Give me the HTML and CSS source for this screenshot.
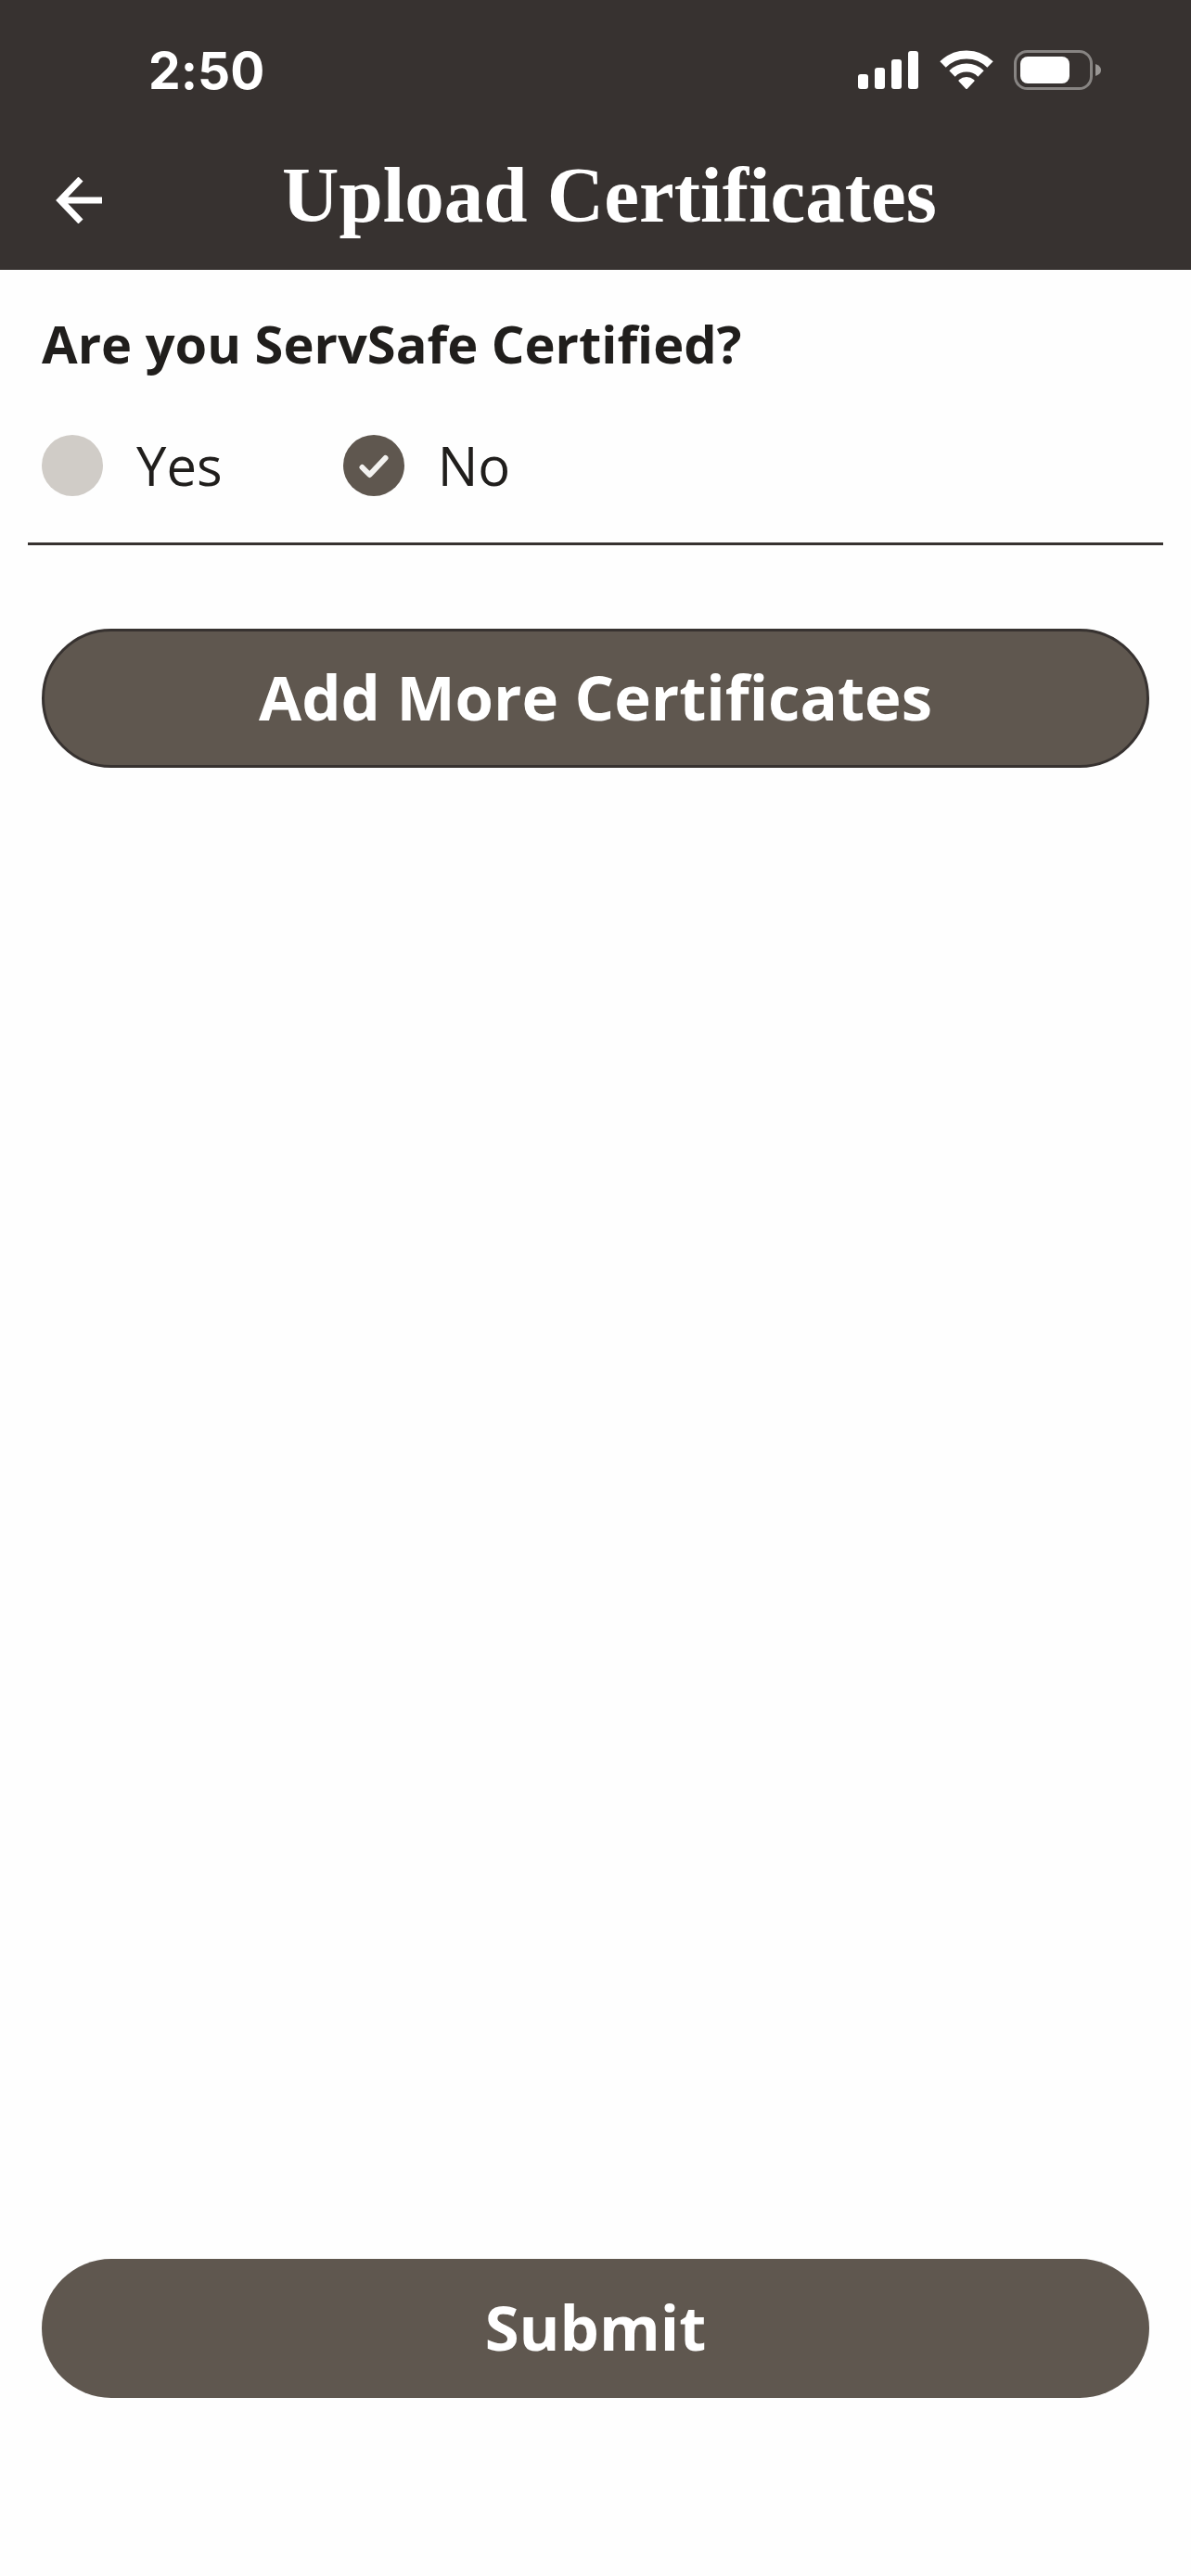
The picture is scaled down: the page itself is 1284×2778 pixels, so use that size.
FILE: index.html
```html
<!DOCTYPE html>
<html lang="en">

<head>
    <meta charset="UTF-8">
    <meta name="viewport" content="width=device-width, initial-scale=1.0">
    <title>Upload Certificates</title>
    <link rel="stylesheet" href="styles.css">
</head>

<body>

    <header class="header">
        <div class="status-bar">
            <span class="time">2:50</span>
            <div class="status-icons">
                <svg width="66" height="44" viewBox="0 0 66 44" fill="#fff" aria-hidden="true">
                    <rect x="0" y="26" width="11" height="16" rx="3" />
                    <rect x="18" y="19" width="11" height="23" rx="3" />
                    <rect x="36" y="10" width="11" height="32" rx="3" />
                    <rect x="54" y="1" width="11" height="41" rx="3" />
                </svg>
                <svg width="58" height="44" viewBox="0 0 58 44" aria-hidden="true">
                    <g fill="none" stroke="#fff" stroke-width="9">
                        <path d="M3.500 15.500A36 36 0 0 1 54.500 15.500" />
                        <path d="M13.500 25.500A22 22 0 0 1 44.500 25.500" />
                    </g>
                    <path d="M20.500 33.500Q20 32.500 21 32A12.500 12.500 0 0 1 37 32Q38 32.500 37.500 33.500L30 41.500Q29 42.500 28 41.500Z" fill="#fff" />
                </svg>
                <svg width="95" height="44" viewBox="0 0 95 44" aria-hidden="true">
                    <rect x="1.500" y="1.500" width="82" height="40" rx="13" fill="none" stroke="#878482" stroke-width="3" />
                    <rect x="7" y="7" width="53" height="29" rx="8" fill="#fff" />
                    <path d="M88 15Q94 17 94 21.500T88 28Z" fill="#999694" />
                </svg>
            </div>
        </div>
        <div class="title-bar">
            <button type="button" class="back" aria-label="Back">
                <svg width="50" height="50" viewBox="0 0 50 50" fill="none" stroke="#fff" stroke-width="7" aria-hidden="true">
                    <path d="M51 25H6M27 2L5 25L27 48" />
                </svg>
            </button>
            <h1>Upload Certificates</h1>
        </div>
    </header>

    <form class="content">
        <fieldset class="question">
            <legend>Are you ServSafe Certified?</legend>
            <div class="options">
                <label class="option">
                    <input type="radio" name="servsafe" value="yes">
                    <span>Yes</span>
                </label>
                <label class="option">
                    <input type="radio" name="servsafe" value="no" checked>
                    <svg class="check" viewBox="0 0 66 66" fill="none" stroke="#f3f2f0" stroke-width="6" stroke-linecap="round" stroke-linejoin="round" aria-hidden="true">
                        <path d="M20.500 35L28.500 43L45.500 25" />
                    </svg>
                    <span>No</span>
                </label>
            </div>
        </fieldset>

        <button type="button" class="btn btn-outlined">Add More Certificates</button>
        <button type="submit" class="btn btn-submit">Submit</button>
    </form>

</body>

</html>
```

FILE: styles.css
```css
:root {
    --color-header: #373230;
    --color-primary: #5f574f;
    --color-radio: #d0ccc7;
    --color-text: #201e1c;
    --color-background: #fefefe;
    --font-family: "Open Sans", Lato, sans-serif;
    --font-title: "Liberation Serif", serif;
}

* {
    box-sizing: border-box;
}

body {
    display: flex;
    flex-direction: column;
    min-height: 100vh;
    margin: 0;
    font-family: var(--font-family);
    font-variant-ligatures: none;
    background-color: var(--color-background);
    color: var(--color-text);
}

.header {
    background-color: var(--color-header);
    color: #fff;
    padding-bottom: 19px;
}

.status-bar {
    display: flex;
    justify-content: space-between;
    align-items: center;
    padding: 44px 96px 0 160px;
}

.time {
    font-family: Inter, sans-serif;
    font-size: 55px;
    font-weight: 700;
    line-height: 64px;
}

.status-icons {
    display: flex;
    gap: 22px;
}

.title-bar {
    display: flex;
    align-items: center;
    padding: 52px 80px 0 60px;
}

.back {
    display: flex;
    padding: 0;
    border: none;
    background: none;
    cursor: pointer;
}

h1 {
    flex: 1;
    margin: 0;
    padding-bottom: 12px;
    font-family: var(--font-title);
    font-size: 85px;
    font-weight: 700;
    font-variant-ligatures: normal;
    line-height: 100px;
    text-align: center;
}

.content {
    flex: 1;
    display: flex;
    flex-direction: column;
    padding: 40px 30px 192px;
}

.question {
    min-width: 0;
    margin: 0;
    padding: 0 15px 50px;
    border: none;
    border-bottom: 3px solid var(--color-header);
}

legend {
    padding: 0;
    font-size: 56px;
    font-weight: 700;
    line-height: 78px;
}

.options {
    display: flex;
    gap: 130px;
    padding-top: 60px;
}

.option {
    position: relative;
    display: flex;
    align-items: center;
    gap: 36px;
    font-size: 58px;
    line-height: 66px;
    cursor: pointer;
}

.option input {
    appearance: none;
    width: 66px;
    height: 66px;
    margin: 0;
    border-radius: 50%;
    background-color: var(--color-radio);
}

.option input:checked {
    background-color: var(--color-primary);
}

/* tick drawn over the radio */
.check {
    position: absolute;
    left: 0;
    top: 0;
    width: 66px;
    height: 66px;
    pointer-events: none;
}

.btn {
    height: 150px;
    margin: 0 15px;
    padding: 0 0 4px;
    border: none;
    border-radius: 75px;
    background-color: var(--color-primary);
    color: #fff;
    font-family: inherit;
    font-size: 67px;
    font-weight: 700;
    font-variant-ligatures: none;
    cursor: pointer;
}

.btn-outlined {
    margin-top: 90px;
    border: 3px solid var(--color-header);
}

.btn-submit {
    margin-top: auto;
}
```
